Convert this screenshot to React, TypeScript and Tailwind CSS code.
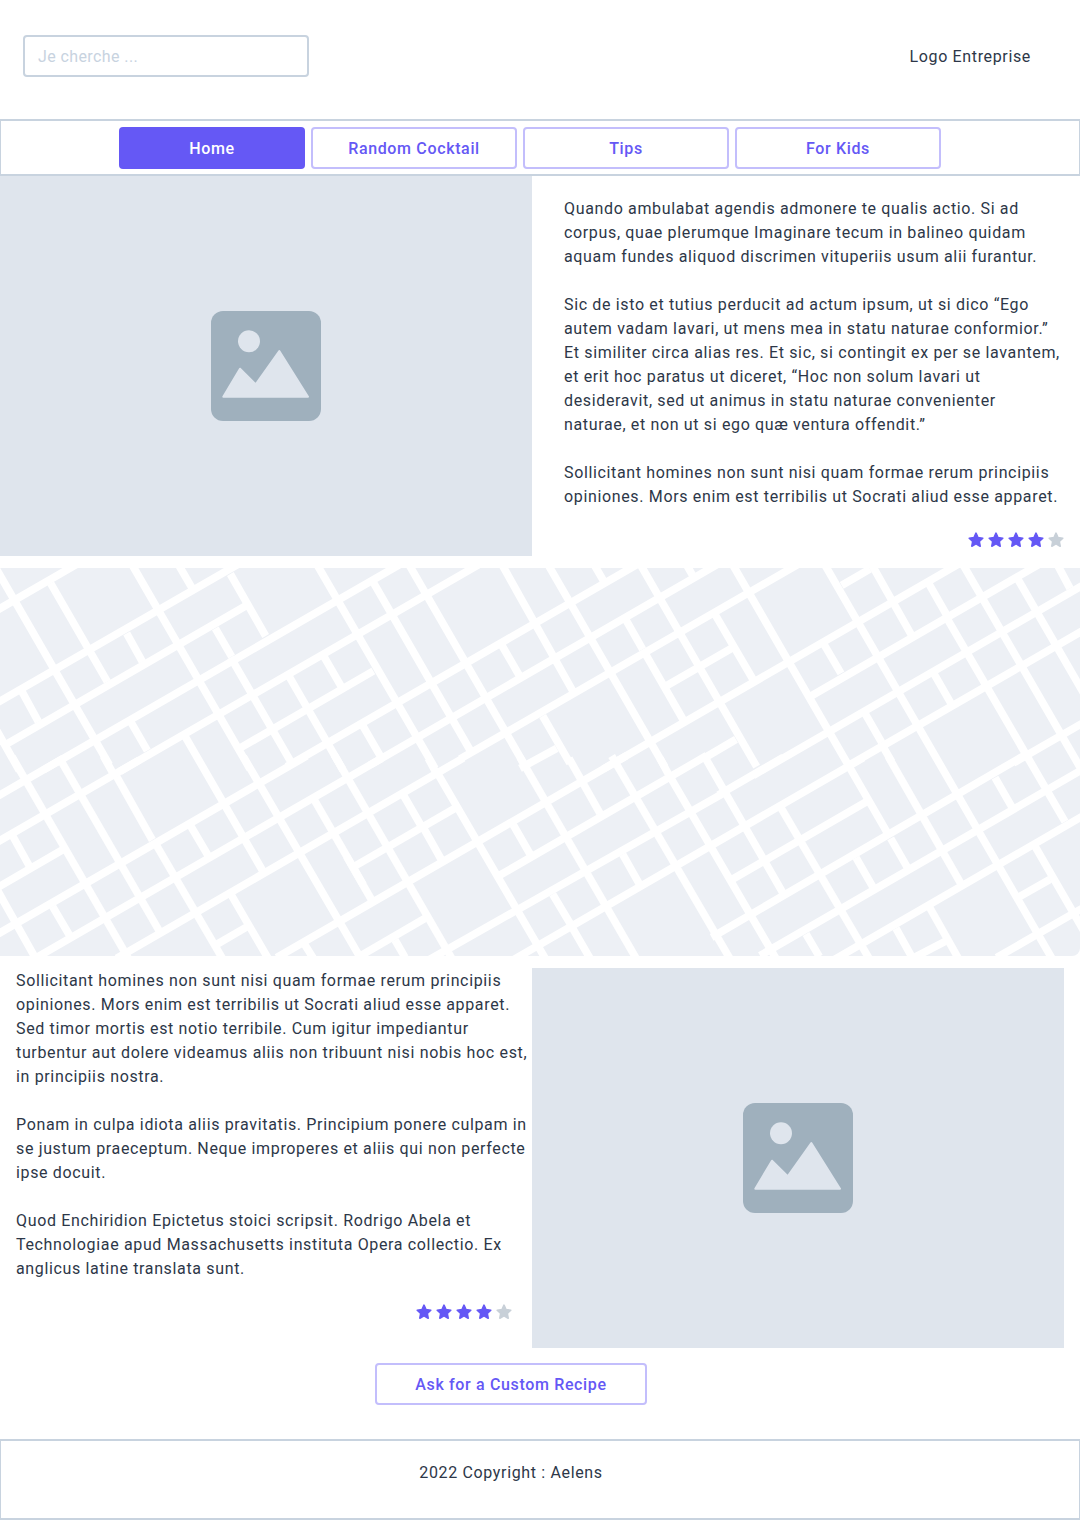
import React from "react";

type Seg = [number, number, number, number];

// street segments, one list per 360x200 tile of the map, in 3x tile coordinates
const tiles: { x: number; y: number; segs: Seg[] }[] = [
  {
    x: 0,
    y: -8,
    segs: [
      [-20, 157, 240, 7], [-10, 429, 740, -2], [15, 555, 745, 133], [130, 630, 1240, -10],
      [360, 634, 1460, 0], [715, 567, 1120, 333], [860, 620, 1950, -9],
      [-12, 25, 328, 615], [152, 70, 322, 365], [392, 485, 442, 572], [66, 395, 115, 485],
      [-22, 490, 58, 632], [395, 12, 750, 627], [533, 10, 575, 82], [691, 42, 797, 228],
      [380, 220, 427, 305], [646, 205, 695, 290], [692, 292, 881, 620], [859, 335, 1029, 630],
      [965, 278, 1024, 380], [950, 12, 1305, 625],
    ],
  },
  {
    x: 360,
    y: -8,
    segs: [
      [30, 615, 1100, -3], [300, 597, 1335, 1], [730, 627, 1820, -2], [480, 625, 590, 565],
      [915, 380, 1130, 256], [1040, 590, 1128, 538],
      [33, 55, 330, 570], [143, 7, 495, 617], [425, 12, 645, 405], [562, 10, 914, 620],
      [700, 10, 732, 65], [835, 3, 1190, 620], [980, 15, 1000, 50], [797, 178, 848, 268],
      [857, 283, 970, 480], [425, 255, 477, 345], [548, 468, 630, 610], [6, 493, 65, 595],
    ],
  },
  {
    x: 720,
    y: -8,
    segs: [
      [365, 76, 450, 27], [270, 410, 990, -6], [100, 646, 1090, 75], [380, 620, 1090, 211],
      [880, 609, 1090, 488],
      [34, 7, 503, 820], [-15, 163, 100, 360], [312, 10, 1010, 1220], [453, 10, 575, 226],
      [626, 70, 680, 165], [725, 7, 1082, 625], [888, 48, 1100, 415], [678, 170, 1035, 785],
      [1010, 10, 1050, 85], [312, 253, 363, 340], [640, 338, 693, 430], [435, 460, 485, 547],
      [492, 565, 515, 605],
    ],
  },
  {
    x: 0,
    y: 192,
    segs: [
      [190, -5, -20, 116], [418, 0, -20, 253], [-10, 384, 190, 268], [-10, 524, 920, -12],
      [90, 604, 1145, -5], [350, 595, 1390, -6], [645, 556, 745, 498], [830, 593, 1880, -13],
      [36, -10, 388, 600], [177, -8, 482, 520], [310, -12, 338, 38], [350, 50, 457, 240],
      [466, 250, 670, 600], [550, -80, 797, 348], [688, 395, 810, 605], [730, -10, 1085, 600],
      [38, 228, 88, 318], [158, 440, 208, 525], [572, 198, 625, 288], [942, 118, 1090, 375],
      [-15, 378, 105, 592], [915, 555, 940, 595],
    ],
  },
  {
    x: 360,
    y: 192,
    segs: [
      [-15, 318, 300, 136], [412, 350, 1040, -13], [190, 609, 1100, 94], [-10, 594, 200, 472],
      [440, 611, 1510, -7],
      [-77, -15, 278, 600], [-40, 290, 35, 420], [205, -5, 228, 38], [228, 32, 570, 620],
      [130, 105, 182, 195], [193, 208, 243, 297], [460, 195, 510, 282], [578, 403, 630, 490],
      [638, 505, 690, 595], [788, 283, 837, 370], [627, -5, 720, 160], [480, -8, 830, 598],
      [755, -12, 1115, 605], [900, -5, 925, 42], [930, 50, 1262, 620], [105, 540, 135, 592],
    ],
  },
  {
    x: 720,
    y: 192,
    segs: [
      [-5, 105, 190, -8], [30, 362, 440, 125], [-25, 532, 910, -12], [120, 587, 1090, 27],
      [320, 612, 1090, 167], [570, 599, 680, 542], [830, 593, 1090, 443], [893, 413, 990, 358],
      [-45, -8, 195, 410], [178, 135, 450, 600], [408, 293, 458, 380], [512, 235, 562, 322],
      [825, 53, 875, 140], [505, -10, 725, 375], [622, 430, 715, 595], [528, 505, 575, 590],
      [258, 522, 298, 590], [940, 250, 1090, 510],
    ],
  },
];

const ImageIcon = () => (
  <svg width="110" height="110" viewBox="0 0 110 110">
    <rect width="110" height="110" rx="12" fill="#9FB0BD" />
    <circle cx="38" cy="30.3" r="11" fill="#DFE5ED" />
    <path
      d="M12.3 85.7 L29 57.7 L44.7 73.3 L68.3 40 L97 85.7 Z"
      fill="#DFE5ED"
      stroke="#DFE5ED"
      strokeWidth="2"
      strokeLinejoin="round"
    />
  </svg>
);

const Star = ({ on }: { on: boolean }) => (
  <svg width="16" height="16" viewBox="0 0 16 16">
    <path
      d="M8 1.2 L10 5.6 L14.8 6.2 L11.3 9.4 L12.2 14.2 L8 11.8 L3.8 14.2 L4.7 9.4 L1.2 6.2 L6 5.6 Z"
      fill={on ? "#6558F5" : "#C8D0D8"}
      stroke={on ? "#6558F5" : "#C8D0D8"}
      strokeWidth="1.6"
      strokeLinejoin="round"
    />
  </svg>
);

const Stars = () => (
  <div className="flex justify-end gap-1">
    {[1, 2, 3, 4, 5].map((n) => (
      <Star key={n} on={n < 5} />
    ))}
  </div>
);

const Picture = () => (
  <div className="w-[532px] h-[380px] shrink-0 bg-[#DFE5ED] flex items-center justify-center">
    <ImageIcon />
  </div>
);

const MapBackground = () => (
  <svg className="block w-full h-[388px] mt-3 rounded-br-lg" viewBox="0 0 1080 388" style={{ background: "#EDF0F5" }}>
    {tiles.map((t, i) => (
      <g key={i} transform={`translate(${t.x} ${t.y}) scale(${1 / 3})`}>
        {t.segs.map((s, j) => (
          <line key={j} x1={s[0]} y1={s[1]} x2={s[2]} y2={s[3]} stroke="#FFFFFF" strokeWidth="23" />
        ))}
      </g>
    ))}
  </svg>
);

const navItems = ["Random Cocktail", "Tips", "For Kids"];

export default function App() {
  return (
    <div className="w-[1080px] h-[1520px] bg-white overflow-hidden text-[#2D3748] text-base leading-6 tracking-[0.65px] font-['Roboto',sans-serif]">
      {/* Header */}
      <header className="h-[119px] flex items-center justify-between pl-[23px] pr-[49px] pb-[7px]">
        <div className="w-[286px] h-[42px] pt-[2px] border-2 border-[#C8D3DF] rounded px-[13px] flex items-center text-[#C8D3DF] tracking-[0.4px]">
          Je cherche ...
        </div>
        <span className="pt-[2px]">Logo Entreprise</span>
      </header>

      {/* Nav */}
      <nav className="h-[57px] border-x border-y-2 border-[#C8D3DF] pl-[118px] pt-[6px] flex items-start gap-[6px]">
        <button className="w-[186px] h-[42px] pt-[2px] rounded bg-[#6558F5] text-white font-medium">Home</button>
        {navItems.map((item) => (
          <button key={item} className="w-[206px] h-[42px] pt-[2px] rounded border-2 border-[#C3BEFC] text-[#6558F5] font-medium">
            {item}
          </button>
        ))}
      </nav>

      {/* First article */}
      <section className="flex">
        <Picture />
        <div className="w-[548px] pl-8 pr-4 pt-[21px] whitespace-nowrap">
          <p>
            Quando ambulabat agendis admonere te qualis actio. Si ad
            <br />
            corpus, quae plerumque Imaginare tecum in balineo quidam
            <br />
            aquam fundes aliquod discrimen vituperiis usum alii furantur.
          </p>
          <p className="mt-6">
            Sic de isto et tutius perducit ad actum ipsum, ut si dico “Ego
            <br />
            autem vadam lavari, ut mens mea in statu naturae conformior.”
            <br />
            Et similiter circa alias res. Et sic, si contingit ex per se lavantem,
            <br />
            et erit hoc paratus ut diceret, “Hoc non solum lavari ut
            <br />
            desideravit, sed ut animus in statu naturae convenienter
            <br />
            naturae, et non ut si ego quæ ventura offendit.”
          </p>
          <p className="mt-6">
            Sollicitant homines non sunt nisi quam formae rerum principiis
            <br />
            opiniones. Mors enim est terribilis ut Socrati aliud esse apparet.
          </p>
          <div className="mt-[23px]">
            <Stars />
          </div>
        </div>
      </section>

      <MapBackground />

      {/* Second article */}
      <section className="flex pl-4 pt-3">
        <div className="w-[516px] shrink-0 pt-px whitespace-nowrap">
          <p>
            Sollicitant homines non sunt nisi quam formae rerum principiis
            <br />
            opiniones. Mors enim est terribilis ut Socrati aliud esse apparet.
            <br />
            Sed timor mortis est notio terribile. Cum igitur impediantur
            <br />
            turbentur aut dolere videamus aliis non tribuunt nisi nobis hoc est,
            <br />
            in principiis nostra.
          </p>
          <p className="mt-6">
            Ponam in culpa idiota aliis pravitatis. Principium ponere culpam in
            <br />
            se justum praeceptum. Neque improperes et aliis qui non perfecte
            <br />
            ipse docuit.
          </p>
          <p className="mt-6">
            Quod Enchiridion Epictetus stoici scripsit. Rodrigo Abela et
            <br />
            Technologiae apud Massachusetts instituta Opera collectio. Ex
            <br />
            anglicus latine translata sunt.
          </p>
          <div className="mt-[23px] pr-5">
            <Stars />
          </div>
        </div>
        <Picture />
      </section>

      {/* CTA */}
      <div className="flex justify-center pr-[58px] mt-[15px]">
        <button className="w-[272px] h-[42px] pt-px rounded border-2 border-[#C3BEFC] text-[#6558F5] font-medium">
          Ask for a Custom Recipe
        </button>
      </div>

      {/* Footer */}
      <footer className="h-[81px] mt-[34px] border-x border-y-2 border-[#C8D3DF] pt-5 pr-[58px] text-center">
        2022 Copyright : Aelens
      </footer>
    </div>
  );
}
